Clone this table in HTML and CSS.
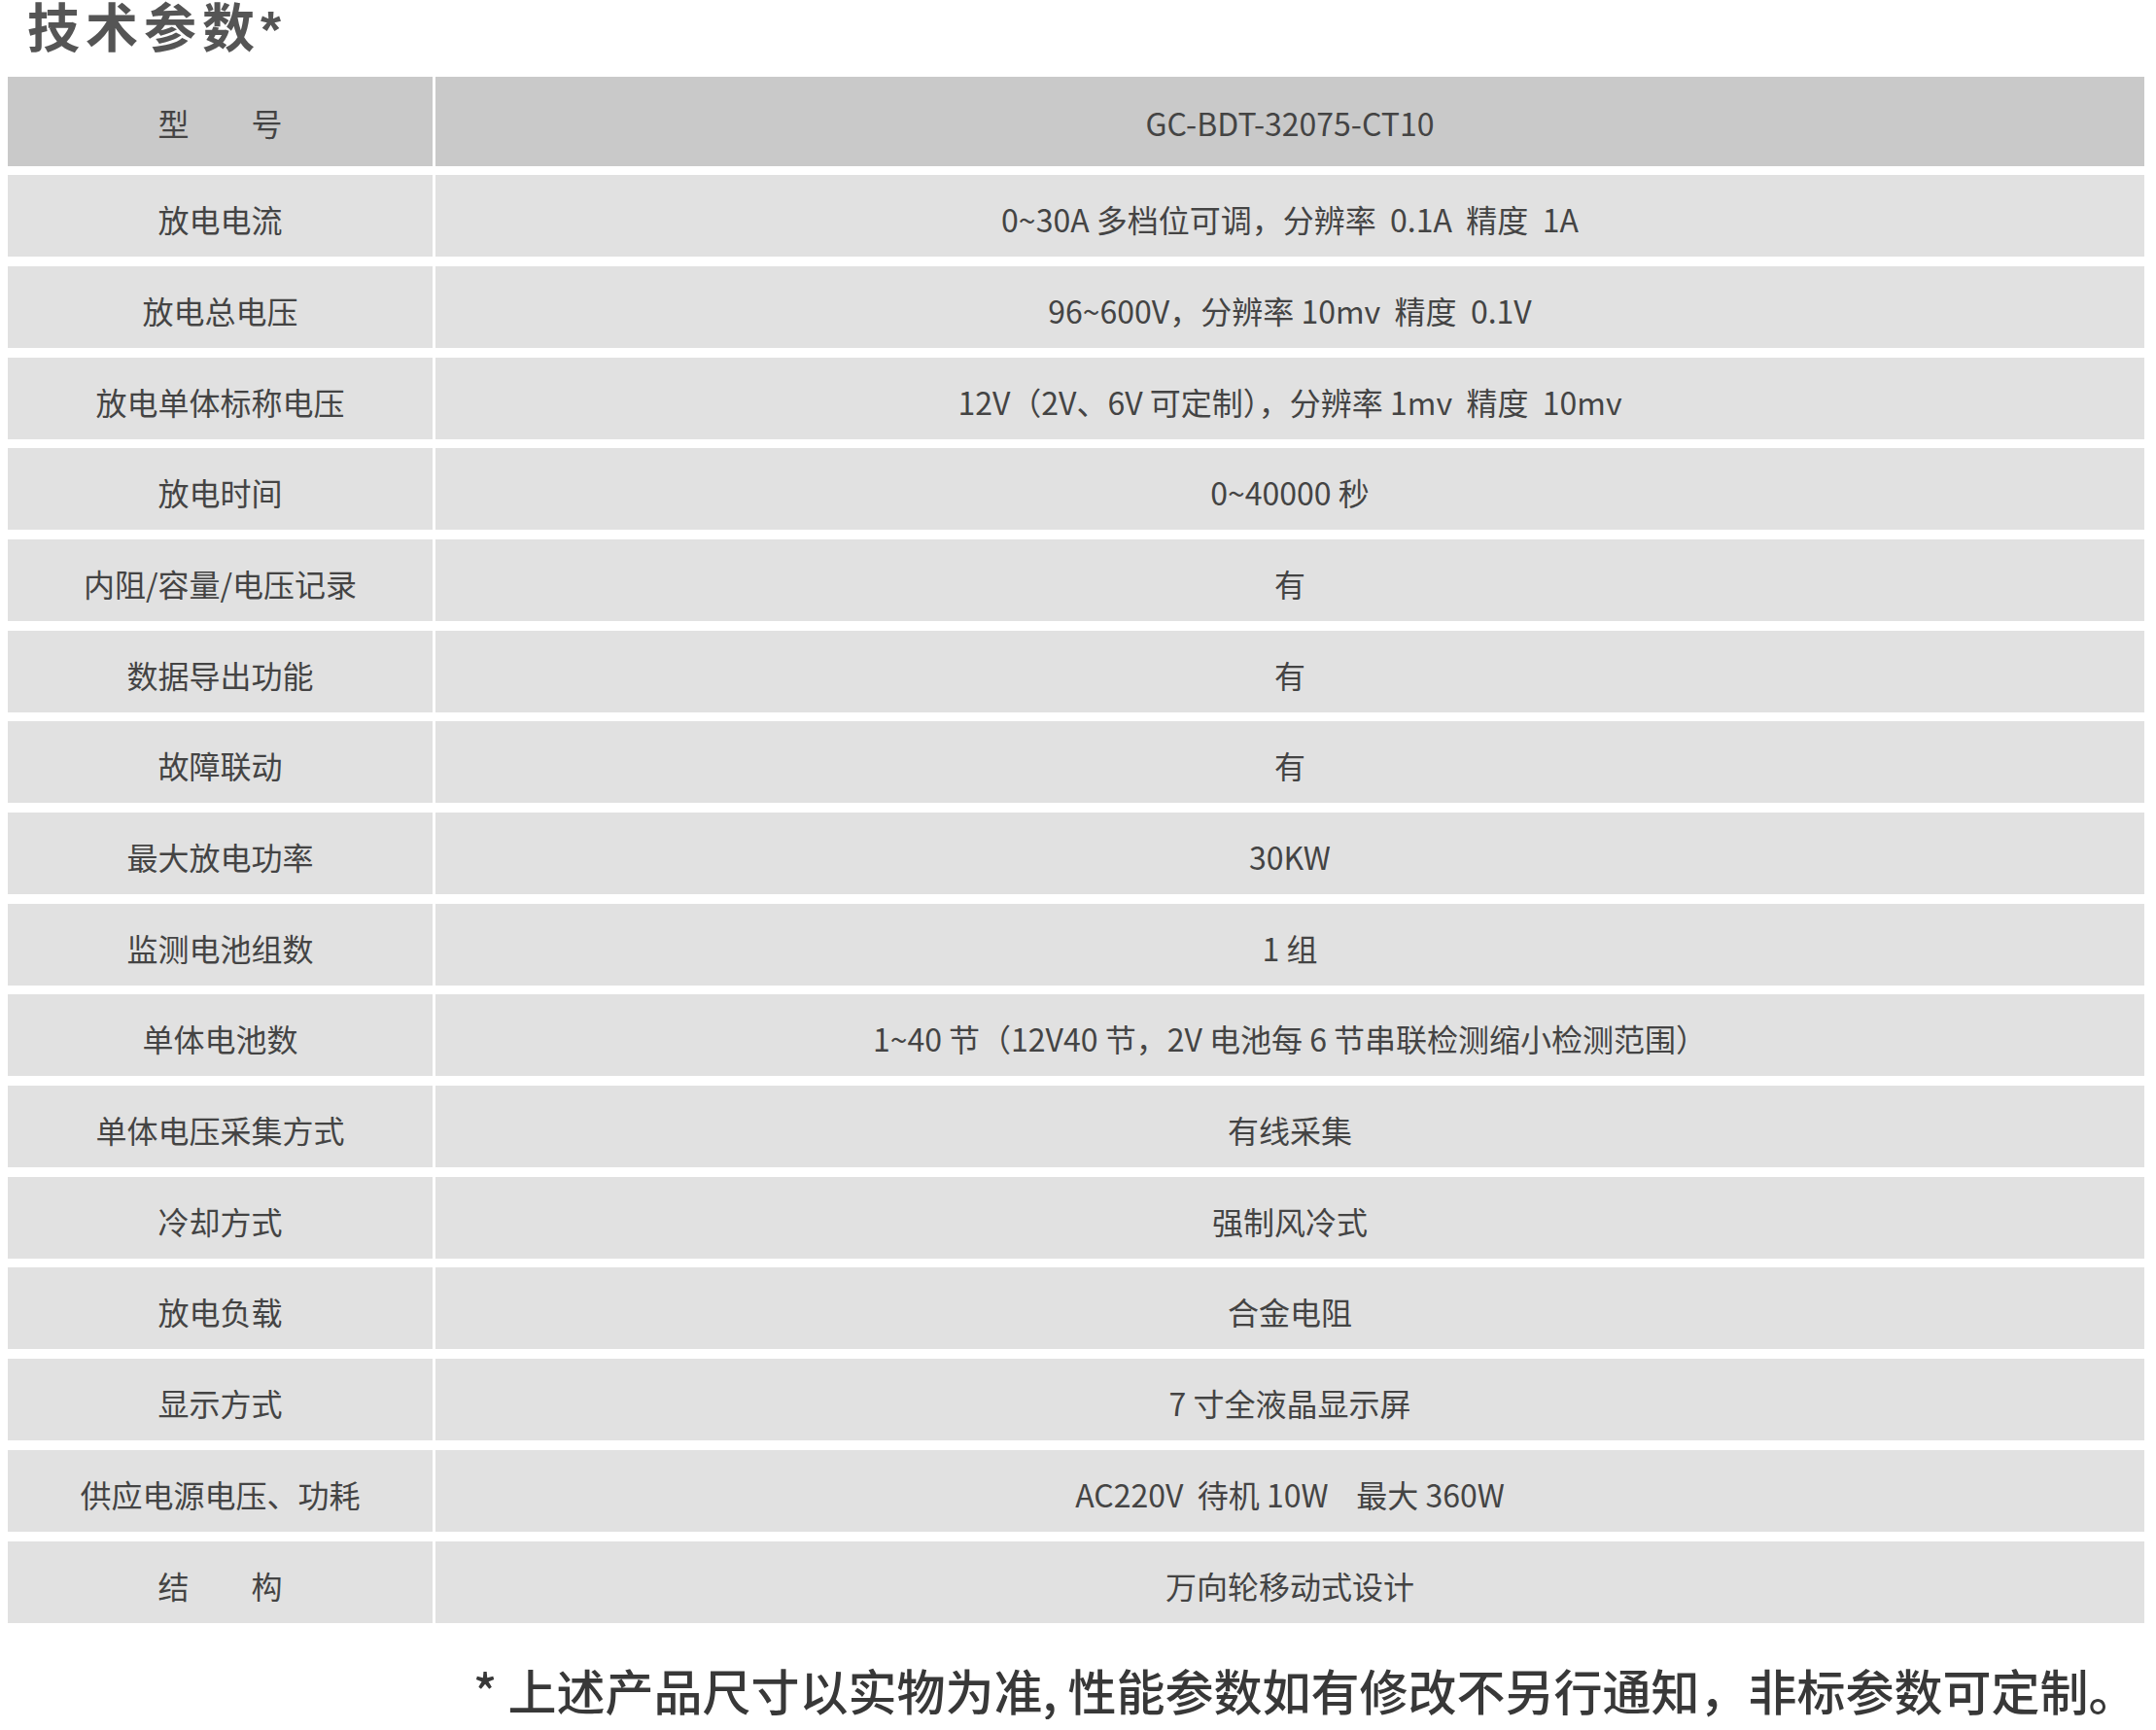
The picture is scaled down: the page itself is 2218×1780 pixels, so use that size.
FILE: index.html
```html
<!DOCTYPE html>
<html lang="zh-CN">
<head>
<meta charset="utf-8">
<title>技术参数</title>
<link rel="stylesheet" href="styles.css">
</head>
<body>
<h1 class="title">技术参数*</h1>
<div class="spec">
  <div class="row head">
    <div class="cell">型　　号</div>
    <div class="cell">GC-BDT-32075-CT10</div>
  </div>
  <div class="row"><div class="cell">放电电流</div><div class="cell">0~30A 多档位可调，分辨率&nbsp; 0.1A&nbsp; 精度&nbsp; 1A</div></div>
  <div class="row"><div class="cell">放电总电压</div><div class="cell">96~600V，分辨率 10mv&nbsp; 精度&nbsp; 0.1V</div></div>
  <div class="row"><div class="cell">放电单体标称电压</div><div class="cell">12V（2V、6V 可定制），分辨率 1mv&nbsp; 精度&nbsp; 10mv</div></div>
  <div class="row"><div class="cell">放电时间</div><div class="cell">0~40000 秒</div></div>
  <div class="row"><div class="cell">内阻/容量/电压记录</div><div class="cell">有</div></div>
  <div class="row"><div class="cell">数据导出功能</div><div class="cell">有</div></div>
  <div class="row"><div class="cell">故障联动</div><div class="cell">有</div></div>
  <div class="row"><div class="cell">最大放电功率</div><div class="cell">30KW</div></div>
  <div class="row"><div class="cell">监测电池组数</div><div class="cell">1 组</div></div>
  <div class="row"><div class="cell">单体电池数</div><div class="cell">1~40 节（12V40 节，2V 电池每 6 节串联检测缩小检测范围）</div></div>
  <div class="row"><div class="cell">单体电压采集方式</div><div class="cell">有线采集</div></div>
  <div class="row"><div class="cell">冷却方式</div><div class="cell">强制风冷式</div></div>
  <div class="row"><div class="cell">放电负载</div><div class="cell">合金电阻</div></div>
  <div class="row"><div class="cell">显示方式</div><div class="cell">7 寸全液晶显示屏</div></div>
  <div class="row"><div class="cell">供应电源电压、功耗</div><div class="cell">AC220V&nbsp; 待机 10W&nbsp;&nbsp;&nbsp; 最大 360W</div></div>
  <div class="row"><div class="cell">结　　构</div><div class="cell">万向轮移动式设计</div></div>
</div>
<p class="note">* 上述产品尺寸以实物为准, 性能参数如有修改不另行通知，非标参数可定制。</p>
</body>
</html>
```

FILE: styles.css
```css
html, body {
  margin: 0;
  padding: 0;
  background: #ffffff;
}

body {
  font-family: "Noto Sans CJK SC", "Noto Sans", "Liberation Sans", sans-serif;
  color: #444444;
}

.title {
  margin: 0 0 19px 0;
  padding-left: 28px;
  font-family: "Liberation Sans", "Noto Sans CJK SC", sans-serif;
  font-size: 54px;
  line-height: 60px;
  height: 60px;
  font-weight: 700;
  letter-spacing: 6px;
  color: #555555;
}

.spec {
  margin-left: 8px;
  width: 2198px;
  display: flex;
  flex-direction: column;
  gap: 9.7px;
}

.row {
  display: grid;
  grid-template-columns: 437px 1fr;
  column-gap: 3px;
  height: 84px;
}

.row.head {
  height: 92px;
  margin-bottom: -0.5px;
}

.cell {
  background: #e1e1e1;
  display: flex;
  align-items: center;
  justify-content: center;
  padding-top: 6px;
  box-sizing: border-box;
  font-size: 32px;
  color: #444444;
  white-space: nowrap;
}

.head .cell {
  background: #c9c9c9;
  padding-top: 2px;
}

.note {
  margin: 37px 0 0 0;
  padding-left: 487px;
  font-size: 50px;
  line-height: 62px;
  font-weight: 500;
  color: #383838;
  white-space: nowrap;
}
```
